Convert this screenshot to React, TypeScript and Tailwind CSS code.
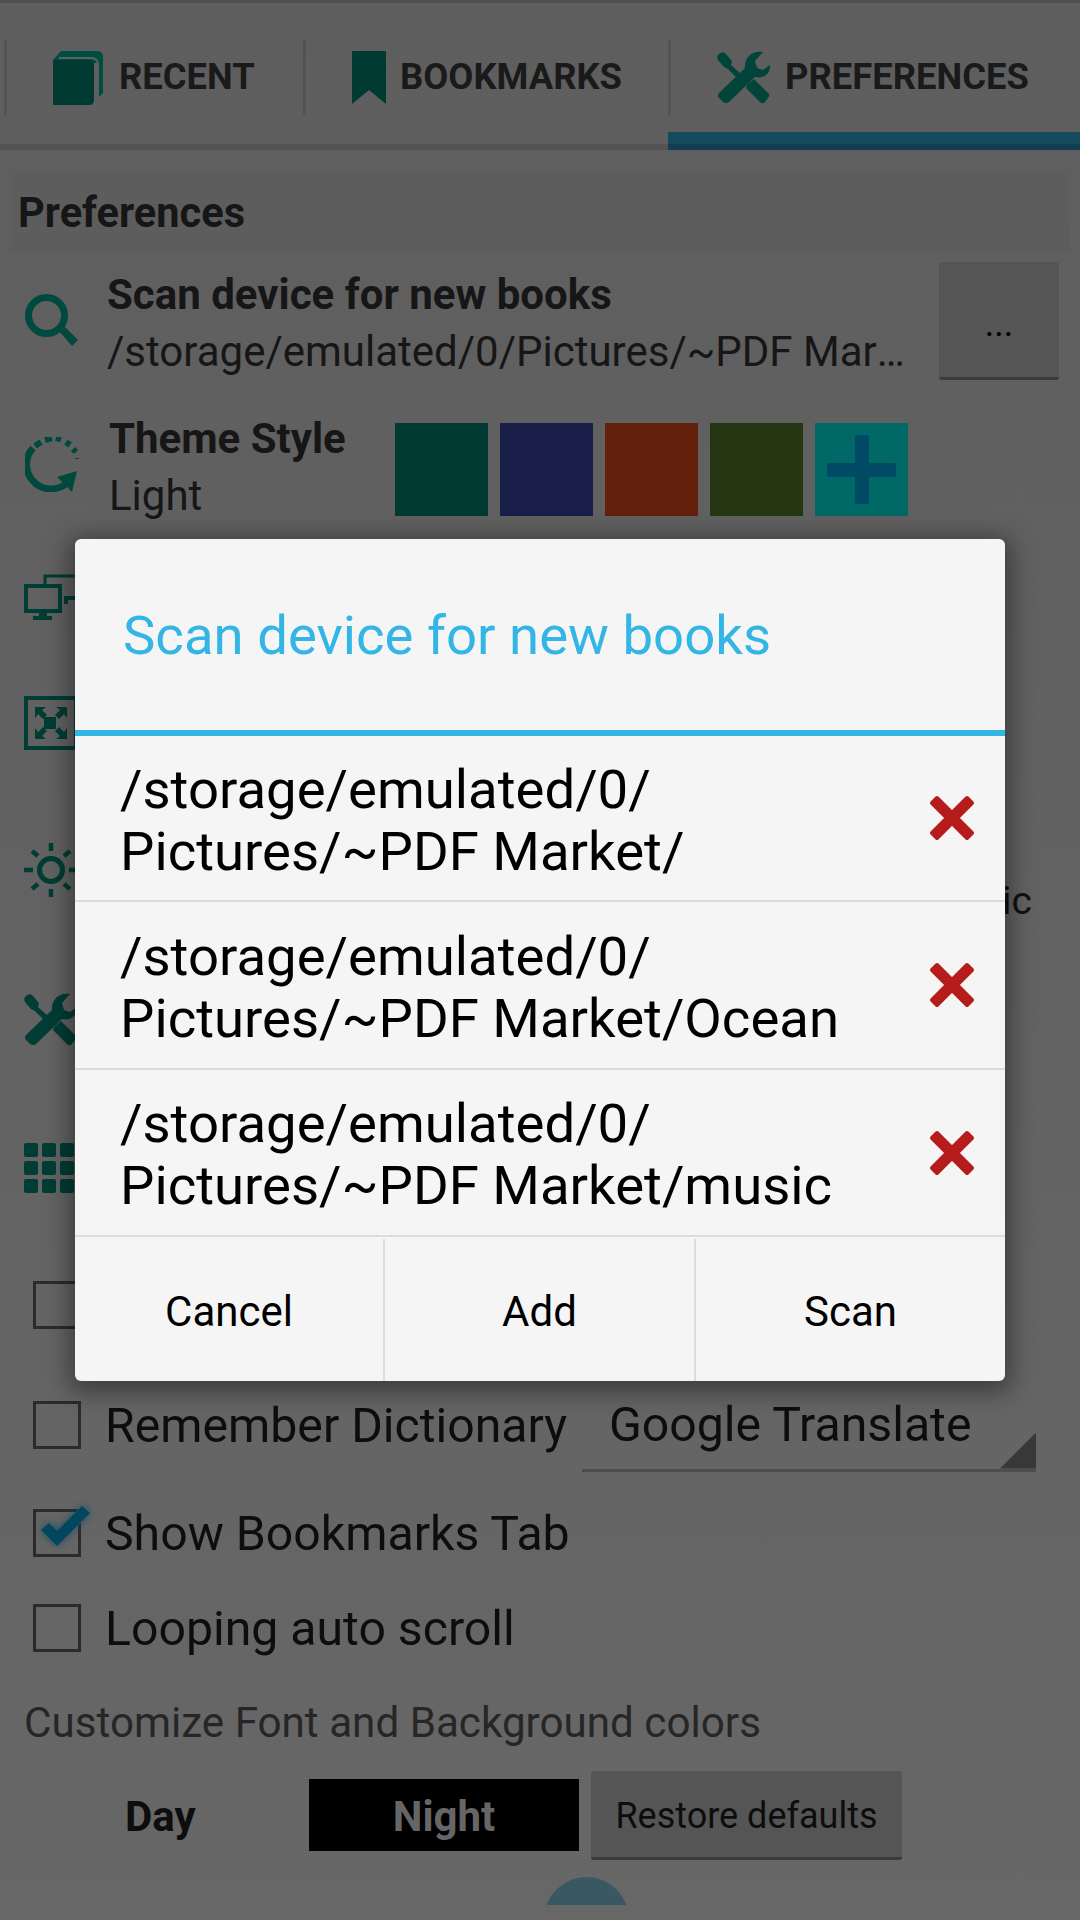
import React from "react";

const T1 = "#003a33";
const T2 = "#004d44";

function Tools({ className = "", color = "#00443a" }: { className?: string; color?: string }) {
  return (
    <svg viewBox="0 0 53 53" className={className} fill={color}>
      <path d="M46 1C36-1 27 6 28 17L2 42Q0 45 2 47L6 51Q9 53 12 51L38 26C47 28 54 22 53 14L46 19 40 17 38 10Z" />
      <path d="M1 9Q-1 6 2 3 5 0 8 2L15 10 14 14 24 23 20 27 11 18 7 16Z" />
      <path d="M30 34L37 28 52 43Q53 45 51 47L47 52Q45 53 43 51L29 37Z" />
    </svg>
  );
}

function Book() {
  return (
    <svg viewBox="0 0 50 54" className="w-[50px] h-[54px]">
      <path d="M0 9L8 0H44Q50 0 50 6V42L45 47V12H0Z" fill={T2} />
      <path d="M6 7H38Q45 7 45 14V47" fill="none" stroke="#5f5f5f" strokeWidth="2" />
      <path d="M0 9H36Q41 9 41 14V49Q41 54 36 54H0Z" fill={T1} />
    </svg>
  );
}

function Bookmark() {
  return (
    <svg viewBox="0 0 34 53" className="w-[34px] h-[53px]">
      <path d="M0 1Q0 0 1 0H33Q34 0 34 1V53L17 39 0 53Z" fill={T1} />
    </svg>
  );
}

function Search() {
  return (
    <svg viewBox="0 0 53 53" className="w-[53px] h-[53px]">
      <circle cx="21.5" cy="21.5" r="18" fill="none" stroke="#00493f" strokeWidth="7" />
      <path d="M33 36L47 52 53 46 38 31Z" fill="#00493f" />
    </svg>
  );
}

function Refresh() {
  return (
    <svg viewBox="0 0 54 55" className="w-[54px] h-[55px]" fill="none" stroke="#00493f">
      <path d="M8 11A24 24 0 1 0 44 44" strokeWidth="7" />
      <path d="M52 34L47 55 32 40Z" fill="#00493f" stroke="none" />
      <path d="M10 9L16 5M20 3L27 1M31 1L36 2.5M41 5L45 8M48 12L51 15M53 21L53 22" strokeWidth="6" />
    </svg>
  );
}

function Monitor() {
  return (
    <svg viewBox="0 0 52 48" className="w-[52px] h-[48px]" fill="#003d35">
      <path d="M21 13V3H52" fill="none" stroke="#003d35" strokeWidth="3" />
      <path d="M2 13H36V38H2Z" fill="none" stroke="#003d35" strokeWidth="4" />
      <path d="M15 39H23V43H28V47H9V43H15Z" />
      <path d="M52 23H40V31H44V27H52Z" />
    </svg>
  );
}

function Fullscreen() {
  return (
    <svg viewBox="0 0 52 54" className="w-[52px] h-[54px]" fill="#003d35">
      <path d="M2 2H52V52H2Z" fill="none" stroke="#003d35" strokeWidth="4" />
      <rect x="20" y="21" width="12" height="12" />
      <path d="M11 11H22L18 14 23 19 19 23 14 18 11 22Z" />
      <path d="M43 11H32L36 14 31 19 35 23 40 18 43 22Z" />
      <path d="M11 43H22L18 40 23 35 19 31 14 36 11 32Z" />
      <path d="M43 43H32L36 40 31 35 35 31 40 36 43 32Z" />
    </svg>
  );
}

function Sun() {
  return (
    <svg viewBox="0 0 54 54" className="w-[54px] h-[54px]" fill="none" stroke="#003d35">
      <circle cx="27" cy="27" r="11.5" strokeWidth="5" />
      <path d="M27 0V8M27 46V54M0 27H9M45 27H54M8 8L14 13M46 8L40 13M8 46L14 41M46 46L40 41" strokeWidth="4.5" />
    </svg>
  );
}

function GridIcon() {
  return (
    <div className="grid grid-cols-3 gap-x-[4px] gap-y-[4px] w-[50px]">
      {Array.from({ length: 9 }).map((_, i) => (
        <div key={i} className="w-[14px] h-[14px] rounded-[2px] bg-[#003d35]" />
      ))}
    </div>
  );
}

function RedX() {
  return (
    <svg viewBox="0 0 46 46" className="w-[46px] h-[46px] shrink-0">
      <path
        d="M8 3L23 18 38 3 43 8 28 23 43 38 38 43 23 28 8 43 3 38 18 23 3 8Z"
        fill="#b71c1c"
        stroke="#b71c1c"
        strokeWidth="4"
        strokeLinejoin="round"
      />
    </svg>
  );
}

function Check({ checked = false }: { checked?: boolean }) {
  return (
    <div className="relative w-[48px] h-[48px] border-[3px] border-[#2b2b2b] shrink-0">
      {checked && (
        <svg viewBox="0 0 49 40" className="absolute left-[5px] top-[-6px] w-[49px] h-[40px] drop-shadow-[0_0_4px_rgba(0,70,95,0.7)]">
          <path d="M0 24L8 17 16 25 41 0 49 7 16 40Z" fill="#00465f" stroke="#2a5060" strokeWidth="1" />
        </svg>
      )}
    </div>
  );
}

function Tab({ w, icon, label, active, gap }: { w: string; icon: React.ReactNode; label: string; active?: boolean; gap: string }) {
  return (
    <div className={`relative flex h-full ${w}`}>
      <div className="mt-[37px] h-[75px] w-[3px] bg-[#535353] shrink-0" />
      <div className={`flex-1 flex items-start pt-[48px] ${gap}`}>
        {icon}
        <span className="mt-[8px] text-[36.4px] leading-[36px] font-bold text-[#1a1a1a]">{label}</span>
      </div>
      {active && (
        <div className="absolute left-0 right-0 bottom-[-6px] h-[18px] bg-[#164a5f] border-b-[6px] border-[#123e52]" />
      )}
    </div>
  );
}

function DialogRow({ a, b, h }: { a: string; b: string; h: string }) {
  return (
    <div className={`flex items-center ${h} pl-[45px] pr-[30px] border-b-[2px] border-[#dcdcdc]`}>
      <div className="flex-1 pt-[3px] text-[54.5px] leading-[62px] text-black">
        <div>{a}</div>
        <div>{b}</div>
      </div>
      <RedX />
    </div>
  );
}

function Dialog() {
  return (
    <div className="absolute left-[75px] top-[539px] w-[930px] h-[842px] bg-[#f5f5f5] rounded-[6px] shadow-[0_5px_24px_6px_rgba(0,0,0,0.4)] flex flex-col overflow-hidden">
      <div className="h-[197px] shrink-0 border-b-[6px] border-[#33b5e5] pl-[48px] flex items-center pt-[2px] text-[54.5px] text-[#33b5e5]">
        Scan device for new books
      </div>
      <DialogRow h="h-[166px]" a="/storage/emulated/0/" b="Pictures/~PDF Market/" />
      <DialogRow h="h-[168px]" a="/storage/emulated/0/" b="Pictures/~PDF Market/Ocean" />
      <DialogRow h="h-[167px]" a="/storage/emulated/0/" b="Pictures/~PDF Market/music" />
      <div className="flex-1 flex pt-[2px] text-[42px] text-black">
        <div className="w-[310px] border-r-[2px] border-[#dcdcdc] flex items-center justify-center pt-[3px]">Cancel</div>
        <div className="w-[311px] border-r-[2px] border-[#dcdcdc] flex items-center justify-center pt-[3px]">Add</div>
        <div className="flex-1 flex items-center justify-center pt-[3px]">Scan</div>
      </div>
    </div>
  );
}

export default function App() {
  return (
    <div
      className="relative w-[1080px] h-[1920px] overflow-hidden bg-gradient-to-b from-[#5e5e5e] to-[#676767] text-[#111]"
      style={{ fontFamily: "Roboto, sans-serif" }}
    >
      <div className="h-[3px] bg-[#505050]" />
      <div className="h-[147px] flex pl-[4px] border-b-[6px] border-[#535353]">
        <Tab w="w-[299px]" gap="pl-[46px] gap-[16px]" icon={<Book />} label="RECENT" />
        <Tab w="w-[365px]" gap="pl-[46px] gap-[14px]" icon={<Bookmark />} label="BOOKMARKS" />
        <Tab w="w-[412px]" gap="pl-[46px] gap-[15px]" icon={<Tools className="w-[53px] h-[53px]" />} label="PREFERENCES" active />
      </div>

      <div className="mt-[21px] mx-[10px] h-[80px] px-[8px] pt-[4px] flex items-center bg-[#5d5d5d] text-[41.6px] font-bold text-[#161616]">
        Preferences
      </div>

      <div className="h-[129px] pt-[11px] pl-[25px] pr-[21px] flex">
        <div className="pt-[32px] w-[83px] shrink-0"><Search /></div>
        <div className="w-[806px] pt-[8px] min-w-0 shrink-0 -ml-[1px]">
          <div className="text-[42px] leading-[50px] font-bold text-[#161616]">Scan device for new books</div>
          <div className="mt-[7px] text-[42px] leading-[50px] text-[#161616] truncate">/storage/emulated/0/Pictures/~PDF Market/</div>
        </div>
        <div className="ml-[26px] w-[120px] h-[118px] shrink-0 bg-[#555] rounded-[3px] border-b-[3px] border-[#3c3c3c] flex items-center justify-center pt-[8px] text-[36px] text-black">...</div>
      </div>

      <div className="h-[150px] pl-[25px] flex">
        <div className="pt-[57px] w-[84px] shrink-0"><Refresh /></div>
        <div className="w-[286px] pt-[34px] shrink-0">
          <div className="text-[42px] leading-[50px] font-bold text-[#161616]">Theme Style</div>
          <div className="mt-[7px] text-[42px] leading-[50px] text-[#161616]">Light</div>
        </div>
        <div className="pt-[43px] flex gap-[12px]">
          <div className="w-[93px] h-[93px] bg-[#003a33]" />
          <div className="w-[93px] h-[93px] bg-[#1a1f49]" />
          <div className="w-[93px] h-[93px] bg-[#62200d]" />
          <div className="w-[93px] h-[93px] bg-[#243612]" />
          <div className="relative w-[93px] h-[93px] bg-[#006865]">
            <div className="absolute left-[40px] top-[12px] w-[14px] h-[69px] rounded-[2px] bg-[#004a66]" />
            <div className="absolute left-[12px] top-[40px] w-[69px] h-[14px] rounded-[2px] bg-[#004a66]" />
          </div>
        </div>
      </div>

      <div className="h-[134px] pl-[24px] flex items-center"><Monitor /></div>
      <div className="h-[118px] pl-[24px] flex items-center"><Fullscreen /></div>
      <div className="h-[176px] pl-[24px] pr-[48px] flex items-center justify-between">
        <Sun />
        <div className="mt-[62px] text-[39px] text-[#111]">Automatic</div>
      </div>
      <div className="h-[122px] pl-[24px] flex items-center"><Tools className="w-[53px] h-[53px]" color="#003d35" /></div>
      <div className="h-[176px] pl-[24px] flex items-center"><GridIcon /></div>

      <div className="h-[98px] pl-[33px] flex items-center"><Check /></div>
      <div className="h-[142px] pl-[33px] pr-[44px] flex items-center">
        <Check />
        <div className="ml-[24px] w-[477px] pt-[2px] text-[48.2px] text-[#0d0d0d] whitespace-nowrap shrink-0">Remember Dictionary</div>
        <div className="relative flex-1 h-[82px] mt-[11px] border-b-[3px] border-[#4d4d4d] pl-[27px] pt-[8px] text-[48.2px] leading-[54px] text-[#0d0d0d]">
          Google Translate
          <div className="absolute right-0 bottom-0 w-[36px] h-[36px] bg-[#383838] [clip-path:polygon(100%_0,100%_100%,0_100%)]" />
        </div>
      </div>
      <div className="h-[74px] pl-[33px] flex items-center">
        <Check checked />
        <div className="ml-[24px] pt-[2px] text-[48.2px] text-[#0d0d0d]">Show Bookmarks Tab</div>
      </div>
      <div className="h-[116px] pl-[33px] flex items-center">
        <Check />
        <div className="ml-[24px] pt-[3px] text-[48.2px] text-[#0d0d0d]">Looping auto scroll</div>
      </div>
      <div className="h-[73px] pl-[24px] flex items-center text-[42.2px] text-[#262626]">Customize Font and Background colors</div>
      <div className="h-[112px] flex items-center">
        <div className="ml-[125px] w-[184px] pt-[3px] text-[42px] font-bold text-[#0d0d0d]">Day</div>
        <div className="w-[270px] h-[72px] bg-black flex items-center justify-center pt-[3px] text-[42px] font-bold text-[#666]">Night</div>
        <div className="ml-[12px] w-[311px] h-[89px] bg-[#555] rounded-[3px] border-b-[3px] border-[#3a3a3a] flex items-center justify-center pt-[5px] text-[36px] text-[#0d0d0d]">Restore defaults</div>
      </div>
      <div className="relative h-[34px] overflow-hidden pl-[60px] pt-[32px] text-[42px] leading-[42px] text-[#0d0d0d] whitespace-nowrap">
        Auto scroll speed
        <div className="absolute left-[544px] top-[6px] w-[85px] h-[85px] rounded-full bg-[#3a5764]" />
      </div>

      <Dialog />
    </div>
  );
}
